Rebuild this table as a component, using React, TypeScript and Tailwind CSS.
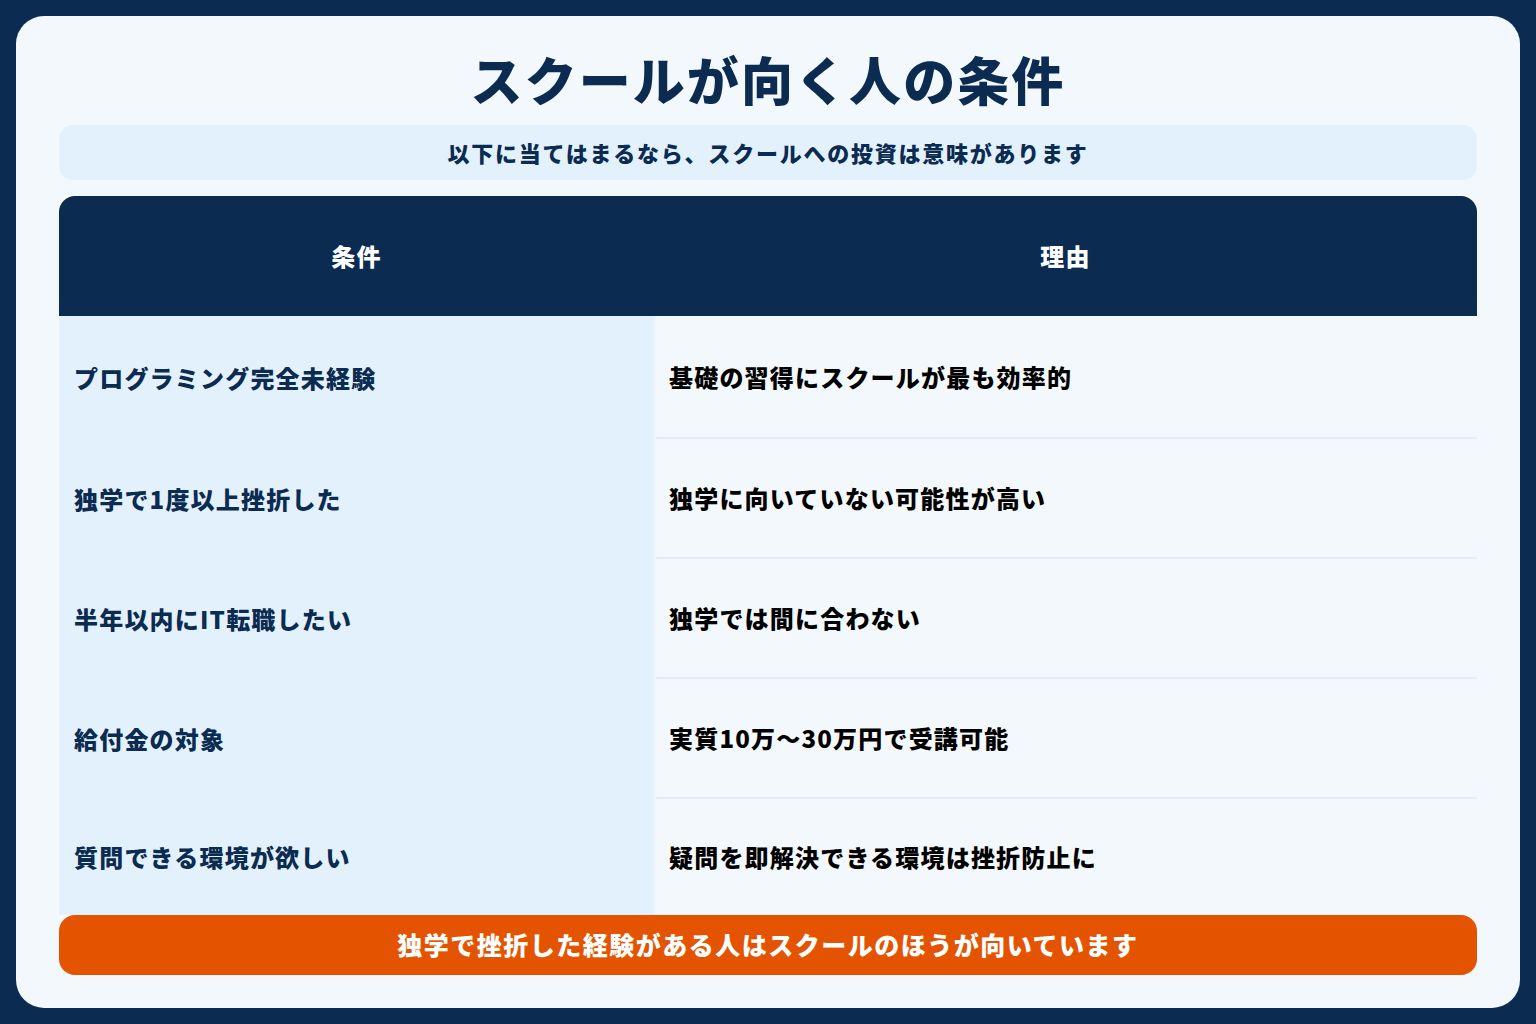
import React from "react";

const rows = [
  ["プログラミング完全未経験", "基礎の習得にスクールが最も効率的", 123],
  ["独学で1度以上挫折した", "独学に向いていない可能性が高い", 120],
  ["半年以内にIT転職したい", "独学では間に合わない", 120],
  ["給付金の対象", "実質10万〜30万円で受講可能", 120],
  ["質問できる環境が欲しい", "疑問を即解決できる環境は挫折防止に", 116],
] as const;

export default function App() {
  return (
    <div
      className="w-[1536px] h-[1024px] bg-[#0b2b51] p-4"
      style={{ fontFamily: '"Noto Sans CJK JP", "Noto Sans", sans-serif' }}
    >
      <div className="h-[992px] rounded-[28px] bg-[#f3f8fc] px-[43px] pt-[31px] flex flex-col">
        <h1 className="text-center text-[52px] leading-[64px] font-black tracking-[0.04em] text-[#0b2b51]">
          スクールが向く人の条件
        </h1>
        <div className="mt-[14px] h-[55px] rounded-[14px] bg-[#e3f1fd] flex items-center justify-center">
          <p className="text-[22px] font-black tracking-[0.08em] text-[#0b2b51]">
            以下に当てはまるなら、スクールへの投資は意味があります
          </p>
        </div>
        <div className="mt-[16px] flex flex-col">
          <div className="h-[120px] rounded-t-[16px] bg-[#0b2b51] grid grid-cols-[595px_1fr]">
            <div className="flex items-center justify-center text-white text-[24px] font-black tracking-[0.05em]">
              条件
            </div>
            <div className="flex items-center justify-center text-white text-[24px] font-black tracking-[0.05em]">
              理由
            </div>
          </div>
          {rows.map(([a, b, h], i) => (
            <div key={i} className="grid grid-cols-[595px_1fr]" style={{ height: h }}>
              <div className="bg-[#e3f1fd] flex items-center pl-[15px] text-[24px] font-black tracking-[0.05em] text-[#0b2b51]">
                {a}
              </div>
              <div className="bg-[#f3f8fc] border-l-2 border-[#eef5fc] flex">
                <div
                  className={
                    "flex-1 flex items-center pl-[13px] text-[24px] font-black tracking-[0.05em] text-black " +
                    (i < rows.length - 1 ? "border-b-2 border-[#e4ebf8]" : "")
                  }
                >
                  {b}
                </div>
              </div>
            </div>
          ))}
        </div>
        <div className="h-[60px] rounded-[16px] bg-[#e45400] flex items-center justify-center">
          <p className="text-[25px] font-black tracking-[0.06em] text-white">
            独学で挫折した経験がある人はスクールのほうが向いています
          </p>
        </div>
      </div>
    </div>
  );
}
